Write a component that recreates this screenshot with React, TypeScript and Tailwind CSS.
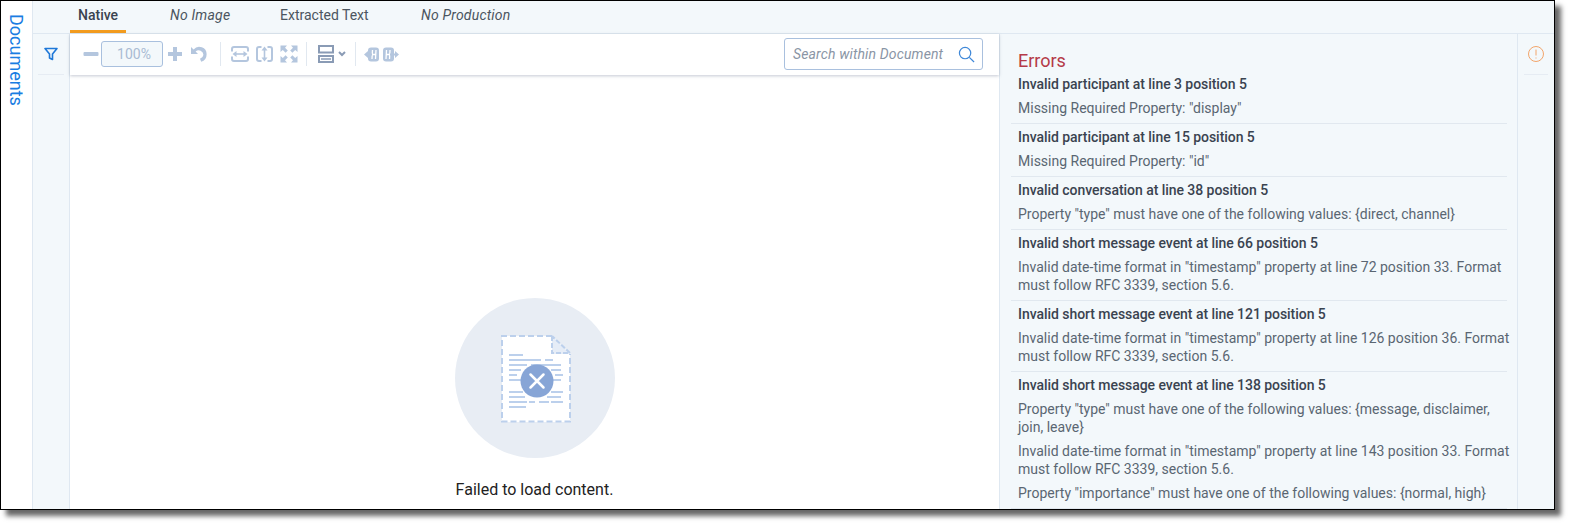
const tabs = [
  { label: 'Native', cls: 'ml-[8px] w-[92px] font-medium text-[#3a4350]', active: true },
  { label: 'No Image', cls: 'w-[110px] italic tracking-[0.2px] text-[#4b5560]' },
  { label: 'Extracted Text', cls: 'w-[141px] text-[#4b5560]' },
  { label: 'No Production', cls: 'w-[100px] italic tracking-[0.2px] text-[#4b5560]' },
]

const errors = [
  { title: 'Invalid participant at line 3 position 5', lines: ['Missing Required Property: "display"'] },
  { title: 'Invalid participant at line 15 position 5', lines: ['Missing Required Property: "id"'] },
  { title: 'Invalid conversation at line 38 position 5', lines: ['Property "type" must have one of the following values: {direct, channel}'] },
  {
    title: 'Invalid short message event at line 66 position 5',
    lines: ['Invalid date-time format in "timestamp" property at line 72 position 33. Format must follow RFC 3339, section 5.6.'],
  },
  {
    title: 'Invalid short message event at line 121 position 5',
    lines: ['Invalid date-time format in "timestamp" property at line 126 position 36. Format must follow RFC 3339, section 5.6.'],
  },
  {
    title: 'Invalid short message event at line 138 position 5',
    lines: [
      'Property "type" must have one of the following values: {message, disclaimer, join, leave}',
      'Invalid date-time format in "timestamp" property at line 143 position 33. Format must follow RFC 3339, section 5.6.',
      'Property "importance" must have one of the following values: {normal, high}',
    ],
  },
]

function Toolbar() {
  return (
    <div className="relative z-10 flex h-[41px] shrink-0 items-center bg-white pb-[1px] pl-[13px] pr-[16px] shadow-[0_1px_3px_rgba(90,100,130,0.35)]">
      {/* zoom */}
      <svg width="16" height="16" viewBox="0 0 16 16">
        <rect x="0.5" y="6" width="15" height="4" rx="1" fill="#b4c6de" />
      </svg>
      <div className="ml-[2px] flex h-[26px] w-[62px] items-center justify-center rounded-[3px] border border-[#a9c0de] bg-[#f3f8fb] pl-[4px] text-[14px] text-[#a9bbd3]">
        100%
      </div>
      <svg width="16" height="16" viewBox="0 0 16 16" className="ml-[4px]">
        <path d="M6 1h4v5h5v4h-5v5H6v-5H1V6h5z" fill="#b4c6de" />
      </svg>
      <svg width="18" height="16" viewBox="0 0 18 16" className="ml-[7px]">
        <path d="M1 1v7h7L5.600 5.600A4.600 4.600 0 0 1 13.400 9a4.700 4.700 0 0 1-3.400 3.800l1.200 2.900A7.500 7.500 0 0 0 16.600 8.500 7.300 7.300 0 0 0 3.600 3.600z" fill="#b4c6de" />
      </svg>
      <div className="ml-[12px] h-[24px] w-px bg-[#e1e8f0]" />
      {/* fit */}
      <svg width="18" height="16" viewBox="0 0 18 16" className="ml-[10px]" fill="none" stroke="#b4c6de">
        <path d="M1 5.500V3a2 2 0 0 1 2-2h12a2 2 0 0 1 2 2v2.500M1 10.500V13a2 2 0 0 0 2 2h12a2 2 0 0 0 2-2v-2.500" strokeWidth="2" />
        <path d="M4 8h10" strokeWidth="1.600" />
        <path d="M5.500 5 1.500 8l4 3zM12.500 5l4 3-4 3z" fill="#b4c6de" stroke="none" />
      </svg>
      <svg width="17" height="18" viewBox="0 0 17 18" className="ml-[7px]" fill="none" stroke="#b4c6de">
        <path d="M5.500 2H3A2 2 0 0 0 1 4v10a2 2 0 0 0 2 2h2.500M11.500 2H14a2 2 0 0 1 2 2v10a2 2 0 0 1-2 2h-2.500" strokeWidth="2" />
        <path d="M8.500 4v10" strokeWidth="1.600" />
        <path d="M5.500 5.500l3-4 3 4zM5.500 12.500l3 4 3-4z" fill="#b4c6de" stroke="none" />
      </svg>
      <svg width="18" height="18" viewBox="0 0 18 18" className="ml-[7px]" fill="#b4c6de">
        <path d="M0.500 0.500h6.500L5 2.800l2.800 2.800-2.200 2.200L2.800 5 .5 7zM17.500 .5V7L15.200 5l-2.800 2.800-2.200-2.200L13 2.800 11 .5zM.5 17.500V11L2.800 13l2.800-2.800 2.200 2.200L5 15.200 7 17.500zM17.500 17.500H11l2-2.300-2.800-2.800 2.200-2.200 2.800 2.800 2.300-2z" />
      </svg>
      <div className="ml-[8px] h-[24px] w-px bg-[#e1e8f0]" />
      {/* page layout */}
      <svg width="16" height="18" viewBox="0 0 16 18" className="ml-[11px]" fill="none" stroke="#8a9bb5" strokeWidth="2">
        <path d="M1 1h14v6.500H1zM1 11h14v6H1z" />
        <path d="M3 14h10" strokeWidth="1.500" />
      </svg>
      <svg width="8" height="6" viewBox="0 0 8 6" className="ml-[4px]">
        <path d="M1 1l3 3 3-3" fill="none" stroke="#8a9bb5" strokeWidth="2" />
      </svg>
      <div className="ml-[9px] h-[24px] w-px bg-[#e1e8f0]" />
      {/* page nav */}
      <svg width="15" height="15" viewBox="0 0 15 15" className="ml-[8px]">
        <rect x="4" y="0.500" width="11" height="14" rx="3" fill="#b4c6de" />
        <path d="M8.500 3 8 12M12 3l-.5 9M8 7.500h4" stroke="#fff" strokeWidth="1.300" fill="none" />
        <path d="M0 7.500 4 4v2.500h4v2H4V11z" fill="#b4c6de" />
      </svg>
      <svg width="16" height="15" viewBox="0 0 16 15" className="ml-[4px]">
        <rect x="0" y="0.500" width="11" height="14" rx="3" fill="#b4c6de" />
        <path d="M3.500 3 3 12M7 3l-.5 9M3 7.500h4" stroke="#fff" strokeWidth="1.300" fill="none" />
        <path d="M16 7.500 12 4v2.500H7v2h5V11z" fill="#b4c6de" />
      </svg>
      {/* search */}
      <div className="ml-auto flex h-[32px] w-[199px] items-center justify-between rounded-[3px] border border-[#a9c0de] bg-white pl-[8px] pr-[7px]">
        <span className="text-[14px] italic tracking-[0.14px] text-[#8a95a5]">Search within Document</span>
        <svg width="17" height="17" viewBox="0 0 18 18" fill="none" stroke="#3f88d8" strokeWidth="1.300">
          <circle cx="7.500" cy="7.500" r="6" />
          <path d="m12 12 5 5" />
        </svg>
      </div>
    </div>
  )
}

function FailedDoc() {
  return (
    <svg width="70" height="88" viewBox="0 0 70 88">
      <path d="M1 1h50l18 18v68H1z" fill="#fff" />
      <path d="M51 1l18 18H51z" fill="#e6edf7" />
      <path d="M51 1H1v85.500h68V19" fill="none" stroke="#bcd0ec" strokeWidth="2" strokeDasharray="6 3" />
      <path d="M51 1v17h18L51 1" fill="none" stroke="#bcd0ec" strokeWidth="2" strokeDasharray="5 2" />
      <path
        d="M8 20h14M8 25h32M44 25h8M8 30h18M30 30h30M8 35h12M50 35h10M8 40h8M54 40h8M8 45h12M50 45h10M8 57h14M50 57h12M8 62h16M46 62h14M8 67h18M28 67h6M38 67h10M50 67h12M8 72h17"
        stroke="#bcd0ec"
        strokeWidth="2"
        fill="none"
      />
      <circle cx="36" cy="46" r="16.500" fill="#87a5d6" />
      <path d="m29.500 39.500 13 13m0-13-13 13" stroke="#fff" strokeWidth="2.500" strokeLinecap="round" />
    </svg>
  )
}

export default function App() {
  return (
    <div className="h-[525px] w-[1570px] overflow-hidden bg-white font-['Roboto',sans-serif]">
      <div className="flex h-[510px] w-[1555px] border border-black bg-white shadow-[6px_6px_5px_rgba(0,0,0,0.6)]">
        {/* documents rail */}
        <div className="w-[32px] shrink-0 border-r border-[#dfe8f1] pl-[5px] pt-[13px]">
          <span className="text-[18px] leading-[20px] text-[#1a7de2] [writing-mode:vertical-rl]">Documents</span>
        </div>

        <div className="flex min-w-0 flex-1 flex-col">
          {/* tabs */}
          <div className="flex h-[33px] shrink-0 border-b border-[#dfe8f1] bg-[#f3f8fb] pl-[37px] text-[14px] leading-[28px]">
            {tabs.map(t => (
              <div key={t.label} className={t.cls}>
                {t.active ? (
                  <div className="-ml-[8px] h-[32px] w-[56px] border-b-[3px] border-[#f39c1f] pl-[8px]">{t.label}</div>
                ) : (
                  t.label
                )}
              </div>
            ))}
          </div>

          <div className="flex min-h-0 flex-1">
            {/* filter rail */}
            <div className="w-[37px] shrink-0 border-r border-[#dfe8f1] bg-[#f3f8fb] px-[5px]">
              <div className="flex h-[41px] items-center justify-center border-b border-[#e6ecf3]">
                <svg width="14" height="14" viewBox="0 0 14 14" fill="none" stroke="#1f78d8" strokeWidth="1.600">
                  <path d="M1 1.500h12L8.500 7v5.500l-3-1.500V7z" strokeLinejoin="round" />
                </svg>
              </div>
            </div>

            {/* viewer */}
            <div className="flex w-[929px] shrink-0 flex-col">
              <Toolbar />
              <div className="flex flex-1 flex-col items-center pt-[223px]">
                <div className="flex h-[160px] w-[160px] items-center justify-center rounded-full bg-[#e8edf4] pl-[3px] pt-[1px]">
                  <FailedDoc />
                </div>
                <p className="mt-[21px] text-[16px] leading-[22px] text-[#222]">Failed to load content.</p>
              </div>
            </div>

            {/* errors */}
            <div className="w-[518px] shrink-0 overflow-hidden border-l border-[#dfe8f1] bg-[#f3f8fb] pl-[11px] pt-[16px]">
              <h2 className="pl-[7px] text-[18px] leading-[21px] text-[#b53a48]">Errors</h2>
              {errors.map((e, i) => (
                <div key={i} className="w-[496px] border-b border-[#e1e8ef] pb-[6px] pl-[7px] pt-[4px] text-[14px] leading-[18px]">
                  <h3 className="font-medium tracking-[-0.05px] text-[#3a4350]">{e.title}</h3>
                  {e.lines.map((l, j) => (
                    <p key={j} className="-mr-[6px] mt-[6px] text-[#5a6672]">{l}</p>
                  ))}
                </div>
              ))}
            </div>

            {/* right rail */}
            <div className="flex-1 border-l border-[#dfe8f1] bg-[#f3f8fb] px-[6px]">
              <div className="flex h-[41px] items-center justify-center border-b border-[#e6ecf3]">
                <svg width="16" height="16" viewBox="0 0 16 16" fill="none" stroke="#f2a56b" strokeWidth="1">
                  <circle cx="8" cy="8" r="7.500" />
                  <path d="M8 3.500v6M8 11.500v1" />
                </svg>
              </div>
            </div>
          </div>
        </div>
      </div>
    </div>
  )
}
